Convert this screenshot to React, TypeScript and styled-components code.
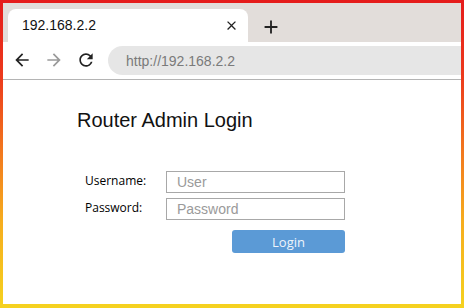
import styled, { createGlobalStyle } from 'styled-components';

const GlobalStyle = createGlobalStyle`
  html, body {
    margin: 0;
    padding: 0;
    background: #fff;
  }
  * {
    box-sizing: border-box;
  }
`;

const Icon = ({ d, size, color }: { d: string; size: number; color: string }) => (
  <svg width={size} height={size} viewBox='0 0 24 24' fill={color}>
    <path d={d} />
  </svg>
);

const paths = {
  back: 'M20 11H7.83l5.59-5.59L12 4l-8 8 8 8 1.41-1.41L7.83 13H20v-2z',
  forward: 'M4 11h12.17l-5.59-5.59L12 4l8 8-8 8-1.41-1.41L16.17 13H4v-2z',
  reload:
    'M17.65 6.35A7.958 7.958 0 0012 4c-4.42 0-7.99 3.58-7.99 8s3.57 8 7.99 8c3.73 0 6.84-2.55 7.73-6h-2.08A5.99 5.99 0 0112 18c-3.31 0-6-2.69-6-6s2.69-6 6-6c1.66 0 3.14.69 4.22 1.78L13 11h7V4l-2.35 2.35z',
  close:
    'M19 6.41L17.59 5 12 10.59 6.41 5 5 6.41 10.59 12 5 17.59 6.41 19 12 13.41 17.59 19 19 17.59 13.41 12z',
  add: 'M19 13h-6v6h-2v-6H5v-2h6V5h2v6h6v2z',
};

const App = () => {
  return (
    <>
      <GlobalStyle />
      <Sty.Frame>
        <Sty.Window>
          <Sty.TabStrip>
            <Sty.Tab>
              <span>192.168.2.2</span>
              <Sty.TabClose>
                <Icon d={paths.close} size={15} color='#222' />
              </Sty.TabClose>
            </Sty.Tab>
            <Sty.NewTab>
              <Icon d={paths.add} size={22} color='#222' />
            </Sty.NewTab>
          </Sty.TabStrip>
          <Sty.Toolbar>
            <Sty.NavButton>
              <Icon d={paths.back} size={20} color='#222' />
            </Sty.NavButton>
            <Sty.NavButton>
              <Icon d={paths.forward} size={20} color='#9a9a9a' />
            </Sty.NavButton>
            <Sty.NavButton>
              <Icon d={paths.reload} size={20} color='#222' />
            </Sty.NavButton>
            <Sty.Omnibox>http://192.168.2.2</Sty.Omnibox>
          </Sty.Toolbar>
          <Sty.Page>
            <Sty.Heading>Router Admin Login</Sty.Heading>
            <Sty.Form onSubmit={(e) => e.preventDefault()}>
              <Sty.Label htmlFor='user'>Username:</Sty.Label>
              <Sty.Input id='user' type='text' placeholder='User' />
              <Sty.Label htmlFor='pass'>Password:</Sty.Label>
              <Sty.Input id='pass' type='password' placeholder='Password' />
              <Sty.Actions>
                <Sty.Button type='submit'>Login</Sty.Button>
              </Sty.Actions>
            </Sty.Form>
          </Sty.Page>
        </Sty.Window>
      </Sty.Frame>
    </>
  );
};

const Sty = {
  Frame: styled.div`
    width: 464px;
    height: 308px;
    padding: 3px 3px 4px 3px;
    background: linear-gradient(
      to bottom,
      #e51b1b 0%,
      #ec3a1c 25%,
      #f27a1e 50%,
      #f6ad1e 72%,
      #f5d21f 100%
    );
  `,
  Window: styled.div`
    width: 100%;
    height: 100%;
    background: #fff;
    display: flex;
    flex-direction: column;
    overflow: hidden;
  `,
  TabStrip: styled.div`
    height: 39px;
    background: #e2ddda;
    display: flex;
    align-items: flex-end;
    padding-left: 5px;
    flex-shrink: 0;
  `,
  Tab: styled.div`
    width: 240px;
    height: 33px;
    background: #fff;
    border-radius: 8px 8px 0 0;
    display: flex;
    align-items: center;
    justify-content: space-between;
    padding: 0 9px 2px 14px;
    font-family: 'Liberation Sans', Arial, sans-serif;
    font-size: 14px;
    color: #111;
  `,
  TabClose: styled.span`
    display: flex;
    margin-top: 1px;
  `,
  NewTab: styled.span`
    display: flex;
    align-self: center;
    margin: 8px 0 0 12px;
  `,
  Toolbar: styled.div`
    height: 38px;
    display: flex;
    align-items: center;
    padding: 0 0 2px 9px;
    border-bottom: 1px solid #b4b4b4;
    flex-shrink: 0;
  `,
  NavButton: styled.span`
    display: flex;
    width: 20px;
    margin-right: 12px;
  `,
  Omnibox: styled.div`
    flex: 1;
    height: 29px;
    margin-top: 2px;
    background: #e6e6e6;
    border-radius: 15px 0 0 15px;
    display: flex;
    align-items: center;
    padding-left: 18px;
    font-family: 'Liberation Sans', Arial, sans-serif;
    font-size: 14px;
    color: #7a7a7a;
  `,
  Page: styled.div`
    flex: 1;
    padding: 29px 0 0 74px;
  `,
  Heading: styled.h1`
    margin: 0;
    font-family: 'Liberation Sans', Arial, sans-serif;
    font-weight: normal;
    font-size: 20px;
    line-height: 23px;
    color: #111;
  `,
  Form: styled.form`
    margin: 39px 0 0 8px;
    display: grid;
    grid-template-columns: 81px 179px;
    grid-auto-rows: 22px;
    row-gap: 5px;
    align-items: center;
  `,
  Label: styled.label`
    font-family: 'Open Sans', 'Noto Sans', sans-serif;
    font-size: 12px;
    color: #000;
    line-height: 22px;
    margin-top: -3px;
  `,
  Input: styled.input`
    width: 179px;
    height: 22px;
    margin: 0;
    border: 1px solid #a8a8a8;
    padding: 0 10px;
    font-family: 'Liberation Sans', Arial, sans-serif;
    font-size: 14px;
    color: #333;
    outline: none;
    &::placeholder {
      color: #9a9a9a;
    }
  `,
  Actions: styled.div`
    grid-column: 2;
    display: flex;
    justify-content: flex-end;
    margin-top: 11px;
  `,
  Button: styled.button`
    width: 113px;
    height: 23px;
    border: none;
    border-radius: 3px;
    background: #5b9ad6;
    color: #eef4fb;
    font-family: 'Open Sans', 'Noto Sans', sans-serif;
    font-size: 13px;
    padding: 0;
    cursor: pointer;
  `,
};

export default App;
